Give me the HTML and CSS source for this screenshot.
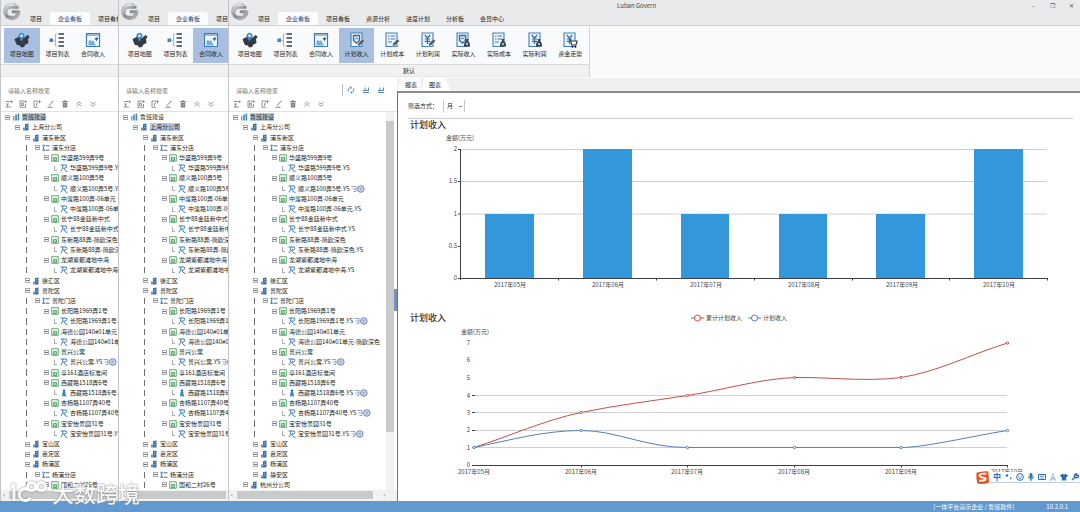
FILE: index.html
```html
<!DOCTYPE html>
<html>
<head>
<meta charset="utf-8">
<title>Luban Govern</title>
<link rel="stylesheet" href="styles.css">
</head>
<body>
<svg class="defs" aria-hidden="true">
  <defs>
    <linearGradient id="metal" x1="0" y1="0" x2="1" y2="1">
      <stop offset="0" stop-color="#c9cccf"/><stop offset=".5" stop-color="#85898d"/><stop offset="1" stop-color="#b4b8bb"/>
    </linearGradient>
    <symbol id="logo" viewBox="0 0 20 20">
      <path d="M15 2.500A8.600 8.600 0 1 0 18.500 9l-2 1A7 7 0 1 1 14 3.500z" fill="#a4a8ab"/>
      <path d="M16.500 5.200H8.500Q4.500 5.200 4 10t3.500 5.200h6.500l1.800-5.400H9.800" fill="none" stroke="url(#metal)" stroke-width="3"/>
      <path d="M4 3.500Q8 .5 13 1.800" fill="none" stroke="#cfd2d4" stroke-width="1.400"/>
    </symbol>
    <symbol id="map" viewBox="0 0 16 16">
      <path d="M.5 7l3-1.500L5 4.500l5 1.500 3.500-3 2 1.500-1.500 3 .5 3.500-3 1.500-1.500 2.500-3 .5-1-2-3-.5L1.500 10z" fill="#343b44"/>
      <path d="M7.500 9.500L5 5.500a3 3 0 1 1 5 0z" fill="#3c8ccb"/><circle cx="7.500" cy="3.800" r="1.400" fill="#d6ecfb"/>
    </symbol>
    <symbol id="list" viewBox="0 0 16 16">
      <path d="M.5 6.500h3.500v3.500H.5z" fill="#3f84c0"/><path d="M4 8.300h2.500M6.500 2v12M6.500 2H8M6.500 14H8" stroke="#8fa6ba" stroke-width=".8" fill="none"/>
      <path d="M9.500 2H15M9.500 6H15M9.500 10H15M9.500 14H15" stroke="#39414b" stroke-width="1.300"/>
    </symbol>
    <symbol id="picture" viewBox="0 0 16 16">
      <path d="M1.500 1.500h13v13h-13z" fill="#f4faff" stroke="#3a7fbd" stroke-width="1.200"/><path d="M1.500 3h13" stroke="#3a7fbd" stroke-width="1"/>
      <path d="M3.500 13.500V9.500l1.500-2 1.500 2L8 8l3 5.500z" fill="#78afd8"/><path d="M9.500 6.500l2.500-1v4z" fill="#2d5f92"/><circle cx="12.300" cy="6.500" r="1" fill="#2d5f92"/>
    </symbol>
    <symbol id="doc" viewBox="0 0 16 16"><path d="M2 1h11v13.500H2z" fill="#eef6fc" stroke="#3d80bb" stroke-width="1.100"/></symbol>
    <symbol id="shield" viewBox="0 0 16 16"><path d="M4.500 3.500h6v5L7.500 11l-3-2.500z" fill="none" stroke="#2c69a5" stroke-width="1.400"/><path d="M6 7.500l1.500-2L9 7.500" fill="none" stroke="#2c69a5"/></symbol>
    <symbol id="lines" viewBox="0 0 16 16"><path d="M4 4h1.500M6.500 4h4.500M4 7h1.500M6.500 7h4.500M4 10h4" stroke="#3a79b5" stroke-width="1.100"/></symbol>
    <symbol id="yuan" viewBox="0 0 16 16"><path d="M4.800 3l2.700 3 2.700-3M7.500 6v6M4.800 7h5.400M4.800 9.300h5.400" fill="none" stroke="#2b6cab" stroke-width="1.200"/></symbol>
    <symbol id="pen" viewBox="0 0 16 16"><path d="M8.500 14.500l.5-3 4.500-4.500 2 2-4.500 4.500z" fill="#4d555e" stroke="#fff" stroke-width=".4"/></symbol>
    <symbol id="bag" viewBox="0 0 16 16"><path d="M10.500 7h3l-.6 2q2.600 1.500 2.100 5.500H9q-.5-4 2.100-5.500z" fill="#3e454e"/><circle cx="12" cy="12" r="1.100" fill="#cfd8e0"/></symbol>
    <symbol id="cart" viewBox="0 0 16 16"><path d="M7 8h1.500l1.200 5h4.300l1-4H9" fill="#fff" stroke="#343a42" stroke-width="1.200"/><circle cx="10.500" cy="14.800" r=".9"/><circle cx="13.500" cy="14.800" r=".9"/></symbol>

    <symbol id="t-root" viewBox="0 0 8 8"><path d="M1 3h1.500v4.500H1z" fill="#6eaacb"/><path d="M3.300 1.500h1.500v6H3.300z" fill="#41799f"/><path d="M5.600.5h1.600v7H5.600z" fill="#3a86be"/></symbol>
    <symbol id="t-area" viewBox="0 0 8 8"><path d="M3 1l3.500-.5v7H3z" fill="#3d6ea5"/><path d="M1 4.500h2.500v3H1z" fill="#7396be"/><path d="M4 2.500h1.500M4 4.500h1.500" stroke="#b9d0e8" stroke-width=".6"/></symbol>
    <symbol id="t-shop" viewBox="0 0 8 8"><path d="M.5.8h2.200v1.800H.5zM.5 5.200h2.200V7H.5z" fill="#3c82bd"/><path d="M3.500 1.800h4M1.600 3v2M3.500 6.200h4" stroke="#56697c" stroke-width="1"/></symbol>
    <symbol id="t-house" viewBox="0 0 8 8"><path d="M.7.7h6.600v6.600H.7z" fill="#eff9f0" stroke="#3f9b55" stroke-width=".8"/><path d="M2.500 6.500V3.500h3v3zM2.500 5h3" fill="none" stroke="#3f9b55" stroke-width=".8"/></symbol>
    <symbol id="t-model" viewBox="0 0 8 8"><path d="M.5 1h5.800q1.300 1.300-.5 3H3.500L6 7.300h1.500M3 1Q3 5 .8 7.300" fill="none" stroke="#3d7fb4" stroke-width="1"/></symbol>
    <symbol id="t-person" viewBox="0 0 8 8"><circle cx="4" cy="1.800" r="1.300" fill="#2f70a8"/><path d="M2.600 3h2.800v2l1 2.500H4.500l-.7-1-.8 1H2z" fill="#3583bf"/></symbol>
    <symbol id="t-badge" viewBox="0 0 14 8"><path d="M.5 1.500H5v5H2.500M1.500 4H5" fill="none" stroke="#7e91ad" stroke-width=".8"/><circle cx="9.800" cy="4" r="3.300" fill="#dbe4f4" stroke="#5c78ab" stroke-width=".9"/><path d="M8.200 3.200h3.200M8.500 5h2.600" stroke="#5c78ab" stroke-width=".7"/></symbol>

    <symbol id="b-add" viewBox="0 0 8 8"><path d="M.5 1.500H5M1 4h3M.5 7H6M2.500 4v3M6.500.5v2.500M5.300 1.700h2.500" fill="none" stroke="#777" stroke-width=".8"/></symbol>
    <symbol id="b-doc" viewBox="0 0 8 8"><path d="M5 1H1v6.300h5.500V4M2.500 3h2v2.500h-2zM6.500.3v2.400M5.300 1.500h2.500" fill="none" stroke="#777" stroke-width=".8"/></symbol>
    <symbol id="b-up" viewBox="0 0 8 8"><path d="M5 1H1v6.300h4M3.500 6V3.500L5 2.500M6.500.3v3M5.300 1.500h2.500" fill="none" stroke="#777" stroke-width=".8"/></symbol>
    <symbol id="b-edit" viewBox="0 0 8 8"><path d="M2 5.500L6.500.8M.5 7.200h5" fill="none" stroke="#777" stroke-width="1"/></symbol>
    <symbol id="b-del" viewBox="0 0 8 8"><path d="M1 1.800h6M3 1h2" stroke="#666"/><path d="M1.800 2.800h4.400v4.700H1.800z" fill="#777"/><path d="M3.200 3.500v3M4.800 3.500v3" stroke="#ddd" stroke-width=".5"/></symbol>
    <symbol id="b-coll" viewBox="0 0 8 8"><path d="M1.500 4L4 2l2.500 2M1.500 6.300L4 4.300l2.500 2" fill="none" stroke="#999" stroke-width=".9"/></symbol>
    <symbol id="b-exp" viewBox="0 0 8 8"><path d="M1.500 2L4 4l2.500-2M1.500 4.300L4 6.300l2.500-2" fill="none" stroke="#999" stroke-width=".9"/></symbol>
    <symbol id="b-ref" viewBox="0 0 8 8"><path d="M1.300 5.500Q.5 2 4 1.500M6.700 2.500Q7.500 6 4 6.700M4 .5v2.300M4 5.500v2" fill="none" stroke="#3f7fae" stroke-width=".9"/></symbol>
    <symbol id="b-in" viewBox="0 0 8 8"><path d="M1 6.500h6M3 1.500v3h3.500v-3M1 4.500h2" fill="none" stroke="#3f7fae" stroke-width=".9"/></symbol>
  </defs>
</svg>

<main class="stage">
  <section class="win win-a" data-active="0" data-selected="0"></section>
  <section class="win win-b" data-active="2" data-selected="1"></section>
  <section class="win win-c" data-active="3" data-selected="0">
    <div class="report">
      <nav class="report-tabs">
        <button type="button">报表</button>
        <button type="button" class="on">图表</button>
      </nav>
      <div class="report-body">
        <div class="filter">
          <label for="period">筛选方式：</label>
          <select id="period"><option>月</option><option>季</option></select>
        </div>
        <h2>计划收入</h2>
        <svg class="chart" viewBox="398 130 682 180" role="img" aria-label="计划收入柱状图">
          <text x="446" y="139">金额(万元)</text>
          <path class="grid" d="M461 148.500h586M461 180.500h586M461 213h586"/>
          <g class="bars">
            <rect x="485" y="213" width="49" height="64"/><rect x="583" y="148" width="49" height="129"/>
            <rect x="681" y="213" width="48" height="64"/><rect x="779" y="213" width="48" height="64"/>
            <rect x="876" y="213" width="49" height="64"/><rect x="974" y="148" width="49" height="129"/>
          </g>
          <path class="axis" d="M460.500 148v131M458 277.500h589.500M558.500 277v2.500M656.500 277v2.500M754.500 277v2.500M852.500 277v2.500M949.500 277v2.500M1047.500 277v2.500M458 148.500h2M458 180.500h2M458 213h2M458 245.500h2"/>
          <g class="end"><text x="457" y="150">2</text><text x="457" y="182">1.5</text><text x="457" y="215">1</text><text x="457" y="247">0.5</text><text x="457" y="279">0</text></g>
          <g class="mid"><text x="510" y="286">2017年05月</text><text x="608" y="286">2017年06月</text><text x="706" y="286">2017年07月</text><text x="804" y="286">2017年08月</text><text x="902" y="286">2017年09月</text><text x="999" y="286">2017年10月</text></g>
        </svg>
        <div class="chart-head">
          <h2>计划收入</h2>
          <ul class="legend">
            <li class="red"><svg viewBox="0 0 13 8"><path d="M0 4h13"/><circle cx="6.500" cy="4" r="3"/></svg>累计计划收入</li>
            <li class="blue"><svg viewBox="0 0 13 8"><path d="M0 4h13"/><circle cx="6.500" cy="4" r="3"/></svg>计划收入</li>
          </ul>
        </div>
        <svg class="chart" viewBox="398 324 682 155" role="img" aria-label="计划收入折线图">
          <text x="461" y="333">金额(万元)</text>
          <path class="grid" d="M474 394.500h533M474 411.500h533M474 429.500h533M474 446.500h533"/>
          <path class="axis" d="M472 464.500h536M581.500 464v2.500M687.500 464v2.500M794.500 464v2.500M901.500 464v2.500M1007.500 464v2.500M472 394.500h3M472 411.500h3M472 429.500h3M472 446.500h3"/>
          <g class="end"><text x="470" y="344">7</text><text x="470" y="361">6</text><text x="470" y="379">5</text><text x="470" y="397">4</text><text x="470" y="414">3</text><text x="470" y="431">2</text><text x="470" y="449">1</text><text x="470" y="466">0</text></g>
          <g class="line red">
            <path d="M474 446.500C510 435 545 419 581 411.500C617 404 652 400 687.500 394.500C723 389 759 378 794.500 376.500C830 376 866 381 901 376.500C937 371 972 353 1007.500 342"/>
            <circle cx="581" cy="411.500" r="1.200"/><circle cx="687.500" cy="394.500" r="1.200"/><circle cx="794.500" cy="376.500" r="1.200"/><circle cx="901" cy="376.500" r="1.200"/><circle cx="1007.500" cy="342" r="1.200"/>
          </g>
          <g class="line blue">
            <path d="M474 446.500C510 439 545 429.500 581 429.500C617 429.500 645 446.500 687.500 446.500H901C925 446.500 972 435 1007.500 429.500"/>
            <circle cx="474" cy="446.500" r="1.200"/><circle cx="581" cy="429.500" r="1.200"/><circle cx="687.500" cy="446.500" r="1.200"/><circle cx="794.500" cy="446.500" r="1.200"/><circle cx="901" cy="446.500" r="1.200"/><circle cx="1007.500" cy="429.500" r="1.200"/>
          </g>
          <g class="mid"><text x="474" y="473">2017年05月</text><text x="581" y="473">2017年06月</text><text x="687" y="473">2017年07月</text><text x="794" y="473">2017年08月</text><text x="901" y="473">2017年09月</text><text x="1007" y="473">2017年10月</text></g>
        </svg>
      </div>
    </div>
  </section>
</main>

<footer class="status"><span>[一体平台演示企业 / 鲁班软件]</span><span>10.2.0.1</span></footer>

<div class="tray">
  <svg class="sogou" viewBox="0 0 16 16"><path d="M1.500 3Q8 1 14 1.500q1 6 .8 12Q8 15.500 2.500 14.500 1 9 1.500 3z" fill="#e8501f"/><path d="M12 4Q5 3.500 4.800 5.800T11 8.500q2 3-6.500 3" fill="none" stroke="#fff" stroke-width="2"/></svg>
  <div class="tray-icons">
    <span>中</span>
    <svg viewBox="0 0 8 8"><circle cx="2" cy="2.500" r="1.200"/><path d="M5 4.500h2L5.500 7z"/></svg>
    <svg viewBox="0 0 8 8"><circle cx="4" cy="4" r="3.400" fill="none" stroke="#2b6fb5"/><circle cx="2.800" cy="3.200" r=".6"/><circle cx="5.200" cy="3.200" r=".6"/><path d="M2.300 4.800h3.400Q4 7 2.300 4.800z"/></svg>
    <svg viewBox="0 0 8 8"><rect x="2.500" width="3" height="5" rx="1.500"/><path d="M1.500 3.500Q1.700 6 4 6t2.500-2.500M4 6v2" fill="none" stroke="#2b6fb5"/></svg>
    <svg viewBox="0 0 8 8"><path d="M.5 1.500h7v5h-7z" fill="none" stroke="#2b6fb5"/><path d="M2 3.200h4M2.500 5h3" stroke="#2b6fb5" stroke-width=".8"/></svg>
    <svg viewBox="0 0 8 8" opacity=".4"><circle cx="4" cy="1.500" r="1.300"/><path d="M3 3h2l2.500 4.500H5L4 5.500l-1 2H.5z"/></svg>
    <svg viewBox="0 0 8 8"><path d="M2.500.8Q4 2 5.500.8L8 2.500 6.800 4.200 6.200 4v3.500H1.800V4l-.6.2L0 2.500z"/></svg>
    <svg viewBox="0 0 8 8"><path d="M1 7l3.500-3.500M7.300 2.200A2 2 0 1 1 5.500.8L5.300 2.500z" fill="none" stroke="#2b6fb5" stroke-width="1.400"/></svg>
  </div>
</div>

<div class="watermark">
  <svg viewBox="0 0 42 26"><path d="M3 7.500Q6 7 6 4.500V22M22.500 18.500a6 6 0 1 1-2-8M19.500 7.500a4 4 0 1 0 8 0 4 4 0 1 0-8 0M29.500 7.500a4 4 0 1 0 8 0 4 4 0 1 0-8 0"/></svg>
  <span>大数跨境</span>
</div>
<script src="app.js"></script>
</body>
</html>
```

FILE: styles.css
```css
* { box-sizing: border-box; }

body {
  margin: 0;
  min-height: 100vh;
  display: flex;
  flex-direction: column;
  position: relative;
  overflow-x: hidden;
  background: #fff;
  color: #1c1f23;
  font: 6px/8px "Noto Sans CJK SC", sans-serif;
}

button, input, select { font: inherit; color: inherit; border: 0; padding: 0; margin: 0; background: none; }
h2 { margin: 0; font-size: 9px; line-height: 12px; font-weight: 500; color: #333; }
ul { list-style: none; margin: 0; padding: 0; }
.defs { position: absolute; width: 0; height: 0; }

.stage { flex: 1; display: flex; }
.win { display: flex; flex-direction: column; border-left: 1px solid #c3c5c8; overflow: hidden; background: #fff; }
.win-a { flex: 0 0 118px; }
.win-b { flex: 0 0 110px; }
.win-c { flex: 1; min-width: 0; }

/* title bar */
.titlebar { height: 26px; flex: none; display: flex; align-items: flex-end; background: #e9eaec; border-bottom: 1px solid #cfd1d4; }
.logo { width: 20px; height: 20px; flex: none; align-self: flex-start; margin: 2px 0 0 1px; }
.tabs { display: flex; flex: none; }
.tabs button { flex: none; height: 13px; padding: 0 8px; white-space: nowrap; }
.tabs .on { background: #fbfcfd; color: #1d4784; border-radius: 2px 2px 0 0; }
.app-title { flex: 1; align-self: flex-start; padding: 2px 0 0 105px; font-size: 6px; color: #444; white-space: nowrap; }
.controls { display: flex; align-self: flex-start; gap: 11px; padding: 2px 5px 0 0; }
.controls button { width: 8px; height: 8px; color: #555; }

/* ribbon */
.ribbon { flex: none; background: #f9fafb; display: flex; }
.group { flex: none; width: 361px; border-right: 1px solid #d5d6d8; }
.tools { display: grid; grid-template-columns: repeat(10, 1fr); height: 39px; padding: 2px 1px 1px 3px; border-bottom: 1px solid #dadbdd; }
.tools button { display: flex; flex-direction: column; align-items: center; gap: 2px; padding-top: 4px; white-space: nowrap; }
.tools svg { width: 16px; height: 16px; }
.tools .on { background: #a9bfe2; }
.group-name { height: 12px; line-height: 12px; text-align: center; background: #f1f1f2; border-bottom: 1px solid #e4e4e5; }

/* body of a window */
.content { flex: 1; display: flex; min-height: 0; padding-top: 1px; }
.side { flex: 1; min-width: 0; display: flex; flex-direction: column; position: relative; }
.win-c .side { flex: 0 0 168px; }
.search { display: flex; align-items: center; height: 19px; padding: 5px 8px 0 7px; }
.search input { flex: 1; min-width: 0; height: 12px; outline: 0; }
.search input::placeholder { color: #777; opacity: 1; }
.search div { display: flex; gap: 7px; padding: 2px 4px; border-left: 1px solid #b7c3cf; }
.search button, .toolbar button { width: 8px; height: 8px; display: flex; }
.search button svg, .toolbar button svg { width: 8px; height: 8px; }
.toolbar { display: flex; gap: 6px; height: 15px; padding: 3px 4px; border-bottom: 1px solid #e1e2e4; overflow: hidden; }
.toolbar button { flex: none; }
.tree-box { flex: 1; display: flex; padding-right: 3px; min-width: 0; }
.tree { flex: 1; min-width: 0; display: grid; grid-auto-rows: 1fr; overflow: hidden; }
.win-a .tree-box, .win-b .tree-box { padding-right: 0; }

.row { display: flex; align-items: center; white-space: nowrap; min-height: 10px; position: relative; }
.l0 { padding-left: 2px; }
.l1 { padding-left: 12px; }
.l2 { padding-left: 22px; }
.l3 { padding-left: 32px; }
.l4 { padding-left: 41px; }
.l5 { padding-left: 50px; }
.l3::before, .l4::before, .l5::before { content: ""; position: absolute; left: 25px; top: 2px; bottom: 2px; border-left: 1px solid #6b6f74; }
.node { flex: none; width: 8px; height: 8px; display: grid; place-items: center; }
.node i { width: 5px; height: 5px; border: 1px solid #a9adb2; background: linear-gradient(#777, #777) center / 3px 1px no-repeat; }
.node .elbow { width: 3px; height: 5px; border-width: 0 0 1px 1px; background: none; }
.row > svg { flex: none; width: 8px; height: 8px; margin: 0 2px 0 1px; }
.row > .badge { width: 14px; }
.row .picked { background: #b8cbe8; }

.vscroll { flex: none; width: 8px; padding: 9px 0 58px; background: #f2f2f2; }
.vscroll i { display: block; height: 100%; background: #c9cacb; }
.hscroll { flex: none; height: 11px; display: flex; align-items: center; gap: 4px; padding: 1px 2px 2px; background: #f2f2f2; color: #555; }
.hscroll i { flex: 1; height: 8px; background: #c9cacb; }
.win-c .hscroll { padding-right: 12px; }
.win-c .hscroll i { margin-right: 6px; }
.handle { position: absolute; right: 0; top: 211px; width: 3px; height: 22px; background: #7a8fbd; }

/* report */
.report { flex: 1; min-width: 0; display: flex; flex-direction: column; background: #f0f0f1; }
.report-tabs { display: flex; height: 13px; }
.report-tabs button { height: 13px; padding: 0 4px 0 8px; background: #fafafa; clip-path: polygon(20% 0, 100% 0, 100% 100%, 0 100%); }
.report-tabs .on { padding: 0 10px 0 8px; background: #fff; clip-path: polygon(12% 0, 80% 0, 100% 100%, 0 100%); }
.report-body { flex: 1; background: #fff; border-left: 1px solid #6f7176; border-top: 2px solid #8b8d90; }
.filter { display: flex; align-items: center; gap: 5px; height: 26px; margin: 0 7px 0 10px; border-bottom: 1px solid #cfd0d2; }
.filter select { appearance: none; width: 22px; height: 12px; padding-left: 3px; border: solid #c5c7ca; border-width: 0 1px; background: linear-gradient(#888, #888) 15px 6px / 3px 1px no-repeat; }
.report-body h2 { padding-left: 12px; }
.chart { display: block; width: 100%; height: auto; }
.chart text { font-size: 6px; fill: #444; }
.end { text-anchor: end; }
.mid { text-anchor: middle; }
.grid { stroke: #ccd0d3; fill: none; }
.axis { stroke: #3c3f43; fill: none; }
.bars { fill: #3398db; }
.chart-head { display: grid; grid-template-columns: 1fr auto 1fr; align-items: center; height: 14px; }
.legend { display: flex; gap: 6px; color: #444; }
.legend li { display: flex; align-items: center; gap: 2px; }
.legend svg { width: 13px; height: 8px; }
.legend svg, .line circle { fill: #fff; }
.line path { fill: none; }
.red svg, .line.red { stroke: #c4504a; }
.blue svg, .line.blue { stroke: #5581b5; }

.status { flex: none; height: 11px; display: flex; justify-content: flex-end; align-items: center; gap: 32px; padding-right: 12px; background: #629ad0; color: #fff; }

/* floating input-method bar */
.tray { position: absolute; right: 0; bottom: 27px; display: flex; align-items: center; }
.sogou { width: 15px; height: 15px; }
.tray-icons { display: flex; align-items: center; gap: 3px; height: 11px; padding: 0 1px 0 3px; background: #fff; border-bottom: 1px solid #b9d2ea; color: #2b6fb5; fill: #2b6fb5; }
.tray-icons svg { width: 8px; height: 8px; }
.tray-icons span { width: 9px; font-size: 8px; font-weight: 700; }

.watermark { position: absolute; left: 8px; bottom: 7px; display: flex; align-items: center; gap: 2px; color: #fff; font-size: 22px; line-height: 26px; font-weight: 500; opacity: .85; text-shadow: 0 0 2px #777, 0 0 1px #888; }
.watermark svg { width: 42px; height: 26px; fill: none; stroke: #fff; stroke-width: 3; filter: drop-shadow(0 0 1px #777); }
```

FILE: app.js
```javascript
const TABS = ["项目", "企业看板", "项目看板", "资源分析", "进度计划", "分析板", "会员中心"];

const TOOLS = [
  ["项目地图", "map"], ["项目列表", "list"], ["合同收入", "picture"],
  ["计划收入", "doc shield pen"], ["计划成本", "doc lines pen"], ["计划利润", "doc yuan pen"],
  ["实际收入", "doc shield bag"], ["实际成本", "doc lines bag"], ["实际利润", "doc yuan bag"],
  ["资金走势", "doc yuan cart"],
];

// [level, name, has badge]; a level 5 row is the model of the house above it
const HEAD = [
  [0, "鲁班建设"], [1, "上海分公司"], [2, "浦东新区"], [3, "浦东分店"],
  [4, "华盛路599弄9号"], [5, "华盛路599弄9号.YS"],
  [4, "顺义路100弄5号"], [5, "顺义路100弄5号.YS", 1],
  [4, "中渡路100弄-06单元"], [5, "中渡路100弄-06单元.YS"],
  [4, "长宁88金廷新中式"], [5, "长宁88金廷新中式.YS"],
  [4, "东新路88弄-简欧深色"], [5, "东新路88弄-简欧深色.YS"],
  [4, "龙湖紫都滩地中海"], [5, "龙湖紫都滩地中海.YS"],
  [2, "徐汇区"], [2, "普陀区"], [3, "普陀门店"],
  [4, "长阳路1969弄1号"], [5, "长阳路1969弄1号.YS", 1],
  [4, "海德公园140#01单元"], [5, "海德公园140#01单元-简欧深色"],
  [4, "普兴公寓"], [5, "普兴公寓.YS", 1],
  [4, "享161酒店标准间"],
  [4, "西藏路1518弄6号"], [5, "西藏路1518弄6号.YS", 1, "person"],
  [4, "杏杨路1107弄40号"], [5, "杏杨路1107弄40号.YS", 1],
  [4, "宝安怡景园31号"], [5, "宝安怡景园31号.YS", 1],
  [2, "宝山区"], [2, "嘉定区"], [2, "杨浦区"],
];
const TAIL_NARROW = [[3, "杨浦分店"], [4, "国和二村26号"]];
const TAIL_WIDE = [[2, "静安区"], [1, "杭州分公司"]];
const ICONS = ["root", "area", "area", "shop", "house", "model"];

const use = (id) => `<use href="#${id}"/>`;
const iconButton = (id, label) =>
  `<button type="button" aria-label="${label}"><svg>${use(id)}</svg></button>`;

function row([level, name, badge, icon], picked) {
  return `<div class="row l${level}">
    <span class="node"><i class="${level === 5 ? "elbow" : ""}"></i></span>
    <svg>${use("t-" + (icon || ICONS[level]))}</svg>
    <span class="${picked ? "picked" : ""}">${name}</span>
    ${badge ? `<svg class="badge">${use("t-badge")}</svg>` : ""}
  </div>`;
}

document.querySelectorAll(".win").forEach((win) => {
  const wide = win.classList.contains("win-c");
  const active = Number(win.dataset.active);
  const selected = Number(win.dataset.selected);
  const report = win.querySelector(".report");
  const rows = HEAD.concat(wide ? TAIL_WIDE : TAIL_NARROW);
  const tabs = wide ? TABS : TABS.slice(0, 3);
  const tools = wide ? TOOLS : TOOLS.slice(0, 3);

  win.insertAdjacentHTML("afterbegin", `
    <header class="titlebar">
      <svg class="logo">${use("logo")}</svg>
      <nav class="tabs">${tabs.map((t, i) => `<button type="button" class="${i === 1 ? "on" : ""}">${t}</button>`).join("")}</nav>
      ${wide ? `<span class="app-title">Luban Govern</span>
      <div class="controls"><button type="button">–</button><button type="button">❐</button><button type="button">✕</button></div>` : ""}
    </header>
    <div class="ribbon"><div class="group">
      <div class="tools">${tools.map(([name, ids], i) =>
        `<button type="button" class="${i === active ? "on" : ""}"><svg>${ids.split(" ").map(use).join("")}</svg>${name}</button>`).join("")}</div>
      <div class="group-name">${wide ? "默认" : ""}</div>
    </div></div>
    <div class="content">
      <div class="side">
        <div class="search">
          <input type="text" placeholder="请输入名称搜索" aria-label="搜索">
          ${wide ? `<div>${iconButton("b-ref", "刷新")}${iconButton("b-in", "导入")}${iconButton("b-in", "导出")}</div>` : ""}
        </div>
        <div class="toolbar">
          ${iconButton("b-add", "新增")}${iconButton("b-doc", "新建")}${iconButton("b-up", "上传")}${iconButton("b-edit", "编辑")}
          ${iconButton("b-del", "删除")}${iconButton("b-coll", "收起")}${iconButton("b-exp", "展开")}
        </div>
        <div class="tree-box">
          <div class="tree">${rows.map((r, i) => row(r, i === selected)).join("")}</div>
          ${wide ? `<div class="vscroll"><i></i></div>` : ""}
        </div>
        <div class="hscroll"><span>‹</span><i></i>${wide ? "<span>›</span>" : ""}</div>
        ${wide ? `<button type="button" class="handle" aria-label="折叠"></button>` : ""}
      </div>
    </div>`);

  if (report) win.querySelector(".content").append(report);
});
```
